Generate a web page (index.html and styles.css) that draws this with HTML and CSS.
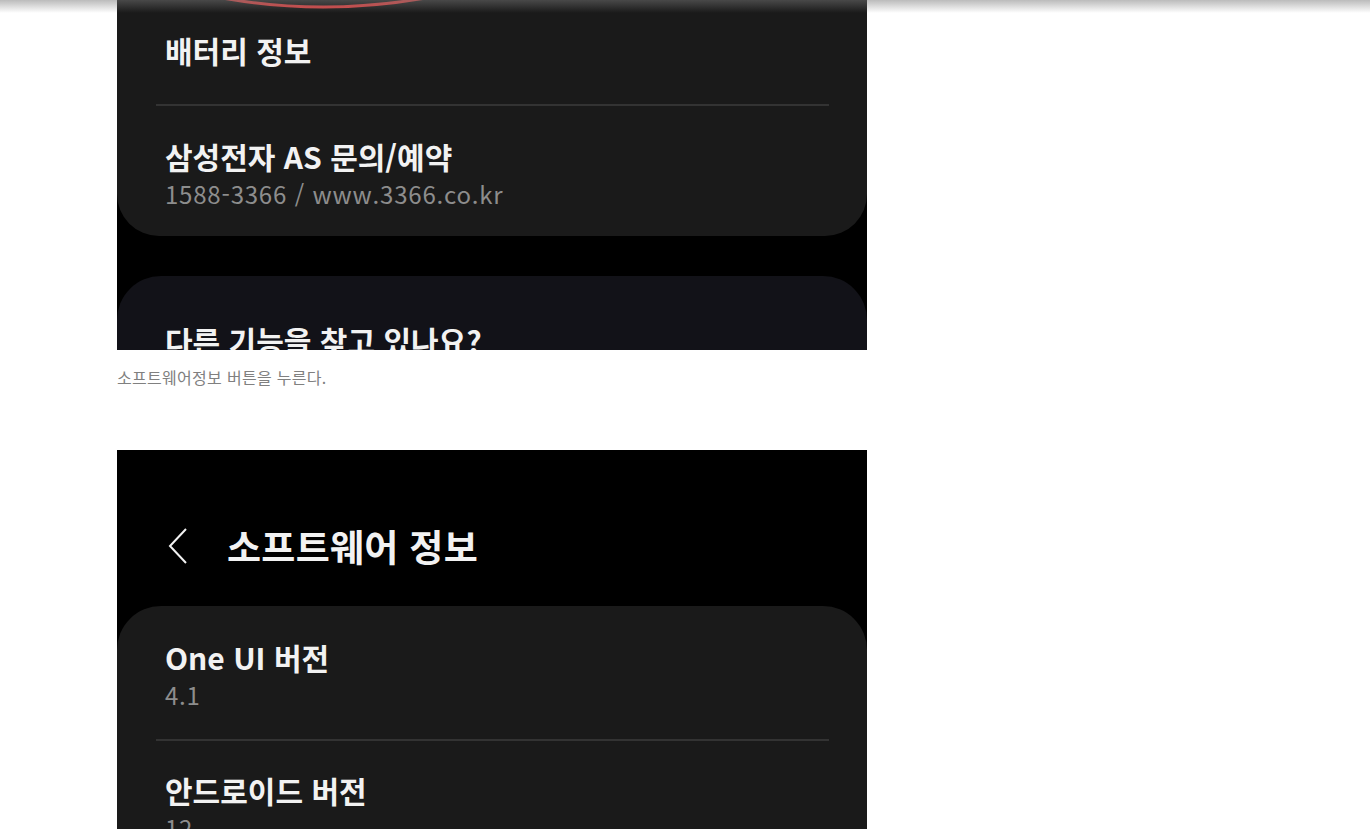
FILE: index.html
```html
<!DOCTYPE html>
<html lang="ko">
<head>
    <meta charset="UTF-8">
    <meta name="viewport" content="width=device-width, initial-scale=1.0">
    <title>소프트웨어 정보 확인하기</title>
    <link rel="stylesheet" href="styles.css">
</head>
<body>

    <!-- 상단 헤더 그림자 -->
    <div class="top-shadow"></div>

    <div class="post">

        <!-- 첫번째 캡처: 휴대전화 정보 하단 -->
        <figure class="shot">
            <div class="screen first">
                <svg class="mark" width="750" height="20" viewBox="0 0 750 20">
                    <path d="M100 -3 Q 206 17 314 -3" fill="none" stroke="#d84242" stroke-width="3" stroke-linecap="round"/>
                </svg>

                <div class="card card-bottom">
                    <div class="row row-first">
                        <p class="item-title">배터리 정보</p>
                    </div>
                    <div class="divider"></div>
                    <div class="row row-last">
                        <p class="item-title">삼성전자 AS 문의/예약</p>
                        <p class="item-sub">1588-3366 / www.3366.co.kr</p>
                    </div>
                </div>

                <div class="card card-top card-navy">
                    <p class="item-title">다른 기능을 찾고 있나요?</p>
                </div>
            </div>
            <figcaption>소프트웨어정보 버튼을 누른다.</figcaption>
        </figure>

        <!-- 두번째 캡처: 소프트웨어 정보 화면 -->
        <figure class="shot">
            <div class="screen second">
                <div class="app-bar">
                    <svg class="back" width="22" height="40" viewBox="0 0 22 40">
                        <polyline points="19,3 3,20 19,37" fill="none" stroke="#f2f2f2" stroke-width="2"/>
                    </svg>
                    <h1 class="app-title">소프트웨어 정보</h1>
                </div>

                <div class="card card-top">
                    <div class="row row-one">
                        <p class="item-title">One UI 버전</p>
                        <p class="item-sub">4.1</p>
                    </div>
                    <div class="divider"></div>
                    <div class="row row-two">
                        <p class="item-title">안드로이드 버전</p>
                        <p class="item-sub">12</p>
                    </div>
                </div>
            </div>
        </figure>

    </div>

</body>
</html>
```

FILE: styles.css
```css
body {
    margin: 0;
    background-color: #fff;
    font-family: "Noto Sans CJK KR", "Noto Sans", sans-serif;
}
p, h1 {
    margin: 0;
}
.top-shadow {
    position: fixed;
    top: 0;
    left: 0;
    right: 0;
    height: 13px;
    background: linear-gradient(rgba(120, 120, 120, 0.5), rgba(120, 120, 120, 0));
    z-index: 10;
}
.post {
    padding-left: 117px;
    width: 750px;
}
.shot {
    margin: 0;
}
/* 캡처 화면 */
.screen {
    position: relative;
    width: 750px;
    background-color: #000;
    overflow: hidden;
    color: #f2f2f2;
}
.screen.first {
    height: 350px;
}
.screen.second {
    margin-top: 62px;
    height: 400px;
}
.mark {
    position: absolute;
    top: 0;
    left: 0;
    z-index: 2;
    filter: blur(0.6px);
}
.card {
    background-color: #1a1a1a;
}
.card-bottom {
    border-radius: 0 0 42px 42px;
}
.card-top {
    border-radius: 44px 44px 0 0;
}
.card-navy {
    background-color: #121218;
    margin-top: 40px;
    padding: 44px 48px 0;
    height: 120px;
}
.row {
    padding: 0 48px;
}
.row-first {
    padding-top: 30px;
    padding-bottom: 34px;
}
.row-last {
    padding-top: 30px;
    padding-bottom: 28px;
}
.divider {
    height: 2px;
    margin: 0 38px 0 39px;
    background-color: #333;
}
.item-title {
    font-size: 30px;
    font-weight: bold;
    line-height: 40px;
}
.item-sub {
    margin-top: 4px;
    font-size: 24px;
    line-height: 28px;
    letter-spacing: 0.8px;
    color: #8d8d8d;
}
/* 앱 상단바 */
.app-bar {
    display: flex;
    align-items: center;
    padding: 74px 48px 38px 50px;
}
.back {
    margin-right: 38px;
}
.app-title {
    font-size: 37px;
    font-weight: bold;
    line-height: 44px;
    letter-spacing: 0.3px;
}
.row-one {
    padding-top: 31px;
    padding-bottom: 30px;
}
.row-two {
    padding-top: 29px;
}
figcaption {
    margin-top: 16px;
    font-size: 16px;
    line-height: 22px;
    color: #808080;
    letter-spacing: 0.3px;
}
```
